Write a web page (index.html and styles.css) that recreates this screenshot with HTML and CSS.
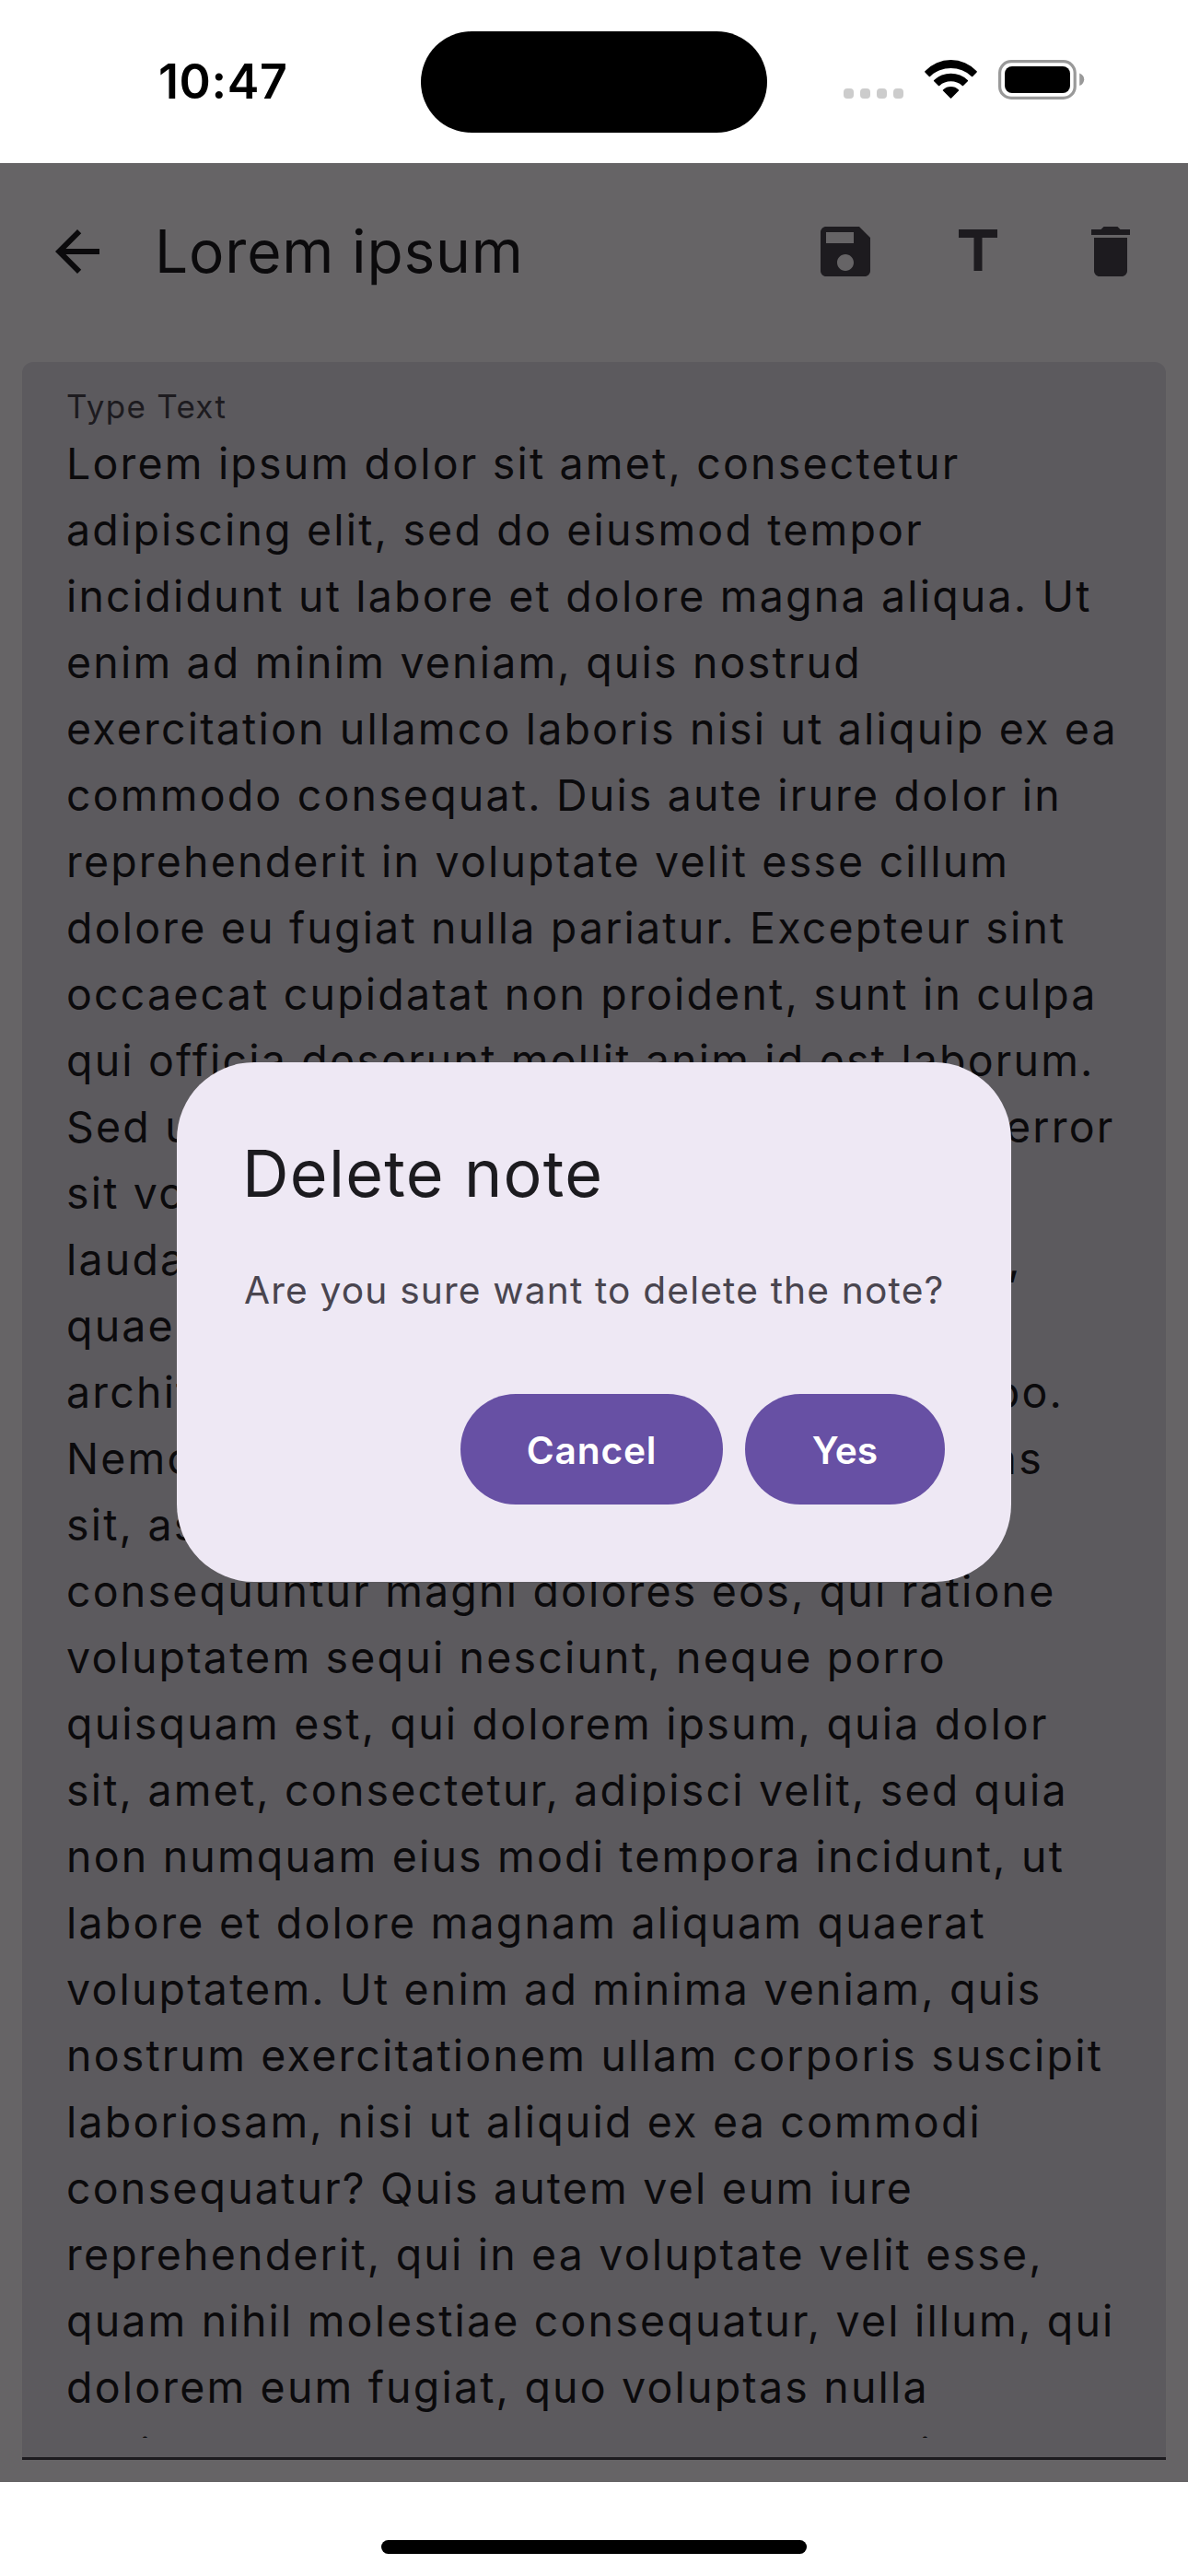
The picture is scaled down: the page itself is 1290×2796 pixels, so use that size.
FILE: index.html
```html
<!DOCTYPE html>
<html lang="en">
<head>
<meta charset="utf-8">
<title>Lorem ipsum</title>
<link rel="stylesheet" href="styles.css">
</head>
<body>
<div class="phone">
  <header class="status">
    <time class="clock">10:47</time>
    <div class="island"></div>
    <div class="indicators">
      <div class="cell"><i></i><i></i><i></i><i></i></div>
      <svg class="wifi" viewBox="0 0 57 42">
        <path d="M.4 12.2A38.5 38.5 0 0 1 56.6 12.2q.6.6 0 1.2L52.2 17.9q-.6.5-1.2 0A32.9 32.9 0 0 0 6 17.9q-.6.5-1.2 0L.4 13.4q-.6-.6 0-1.2z"/>
        <path d="M10.2 22.1A26.3 26.3 0 0 1 46.8 22.1q.6.6 0 1.2L42 27.9q-.6.5-1.2 0A18.7 18.7 0 0 0 16.2 27.9q-.6.5-1.2 0L10.2 23.3q-.6-.6 0-1.2z"/>
        <path d="M20 32.4A12.2 12.2 0 0 1 37 32.4q.6.6 0 1.2L29.1 41.6q-.6.5-1.2 0L20 33.6q-.6-.6 0-1.2z"/>
      </svg>
      <svg class="battery" viewBox="0 0 95 43">
        <rect x="1.6" y="1.6" width="81.6" height="39.8" rx="12.5" fill="none" stroke="#999" stroke-width="3.2"/>
        <rect x="7" y="7" width="71" height="29" rx="8"/>
        <path d="M88.2 14.5v13.6q5-2 5-6.8t-5-6.8z" fill="#999"/>
      </svg>
    </div>
  </header>

  <main class="app">
    <div class="toolbar">
      <svg class="icon back" viewBox="0 0 24 24"><path d="M20 11H7.83l5.59-5.59L12 4l-8 8 8 8 1.41-1.41L7.83 13H20z"/></svg>
      <h1 class="title">Lorem ipsum</h1>
      <svg class="icon" viewBox="0 0 24 24"><path d="M17 3H5c-1.110 0-2 .9-2 2v14c0 1.100.89 2 2 2h14c1.100 0 2-.9 2-2V7zm-5 16c-1.660 0-3-1.340-3-3s1.340-3 3-3 3 1.340 3 3-1.340 3-3 3m3-10H5V5h10z"/></svg>
      <svg class="icon" viewBox="0 0 24 24"><path d="M5 4v3h5.500v12h3V7H19V4z"/></svg>
      <svg class="icon" viewBox="0 0 24 24"><path d="M6 19c0 1.100.9 2 2 2h8c1.100 0 2-.9 2-2V7H6zM19 4h-3.500l-1-1h-5l-1 1H5v2h14z"/></svg>
    </div>

    <div class="field">
      <div class="label">Type Text</div>
      <div class="note">
        <p>Lorem ipsum dolor sit amet, consectetur</p>
        <p>adipiscing elit, sed do eiusmod tempor</p>
        <p>incididunt ut labore et dolore magna aliqua. Ut</p>
        <p>enim ad minim veniam, quis nostrud</p>
        <p>exercitation ullamco laboris nisi ut aliquip ex ea</p>
        <p>commodo consequat. Duis aute irure dolor in</p>
        <p>reprehenderit in voluptate velit esse cillum</p>
        <p>dolore eu fugiat nulla pariatur. Excepteur sint</p>
        <p>occaecat cupidatat non proident, sunt in culpa</p>
        <p>qui officia deserunt mollit anim id est laborum.</p>
        <p>Sed ut perspiciatis, unde omnis iste natus error</p>
        <p>sit voluptatem accusantium doloremque</p>
        <p>laudantium, totam rem aperiam eaque ipsa,</p>
        <p>quae ab illo inventore veritatis et quasi</p>
        <p>architecto beatae vitae dicta sunt, explicabo.</p>
        <p>Nemo enim ipsam voluptatem, quia voluptas</p>
        <p>sit, aspernatur aut odit aut fugit, sed quia</p>
        <p>consequuntur magni dolores eos, qui ratione</p>
        <p>voluptatem sequi nesciunt, neque porro</p>
        <p>quisquam est, qui dolorem ipsum, quia dolor</p>
        <p>sit, amet, consectetur, adipisci velit, sed quia</p>
        <p>non numquam eius modi tempora incidunt, ut</p>
        <p>labore et dolore magnam aliquam quaerat</p>
        <p>voluptatem. Ut enim ad minima veniam, quis</p>
        <p>nostrum exercitationem ullam corporis suscipit</p>
        <p>laboriosam, nisi ut aliquid ex ea commodi</p>
        <p>consequatur? Quis autem vel eum iure</p>
        <p>reprehenderit, qui in ea voluptate velit esse,</p>
        <p>quam nihil molestiae consequatur, vel illum, qui</p>
        <p>dolorem eum fugiat, quo voluptas nulla</p>
        <p>pariatur? At vero eos et accusamus et iusto</p>
      </div>
    </div>

    <div class="scrim">
      <section class="dialog" role="dialog">
        <h2 class="dialog-title">Delete note</h2>
        <p class="dialog-text">Are you sure want to delete the note?</p>
        <div class="actions">
          <button class="button cancel">Cancel</button>
          <button class="button yes">Yes</button>
        </div>
      </section>
    </div>
  </main>

  <footer class="home"><div class="home-bar"></div></footer>
</div>
</body>
</html>
```
FILE: styles.css
```css
* { box-sizing: border-box; margin: 0; padding: 0; }
body { background: #fff; font-family: Inter, "Liberation Sans", sans-serif; font-weight: 400; }
svg { display: block; flex: none; }

.phone { width: 1290px; height: 2796px; display: flex; flex-direction: column; overflow: hidden; }

/* System status bar */
.status { height: 177px; flex: none; display: grid; grid-template-columns: 457px 376px 457px; }
.clock { padding: 57px 0 0 172px; font-size: 52px; line-height: 64px; font-weight: 600; letter-spacing: .6px; }
.island { margin-top: 34px; height: 110px; border-radius: 55px; background: #000; }
.indicators { display: flex; align-items: flex-start; padding: 65px 0 0 83px; }
.cell { display: flex; gap: 7px; padding-top: 31px; }
.cell i { width: 11px; height: 11px; border-radius: 4px; background: #ccc; }
.wifi { width: 57px; height: 42px; margin-left: 23px; }
.battery { width: 95px; height: 43px; margin-left: 23px; }

/* Note editor */
.app { position: relative; height: 2517px; flex: none; padding: 0 24px 24px; background: #fffbfe; display: flex; flex-direction: column; gap: 24px; }
.toolbar { height: 192px; flex: none; display: flex; align-items: center; gap: 72px; padding: 0 24px; }
.icon { width: 72px; height: 72px; fill: #49454f; }
.icon.back { fill: #1c1b1f; }
.title { flex: 1; margin-left: -24px; font-size: 64px; line-height: 84px; font-weight: 400; letter-spacing: .85px; color: #1c1b1f; white-space: nowrap; }
.field { flex: 1; min-height: 0; display: flex; flex-direction: column; padding: 22px 48px 21px; border-radius: 12px 12px 0 0; border-bottom: 3px solid #49454f; background: #e7e0ec; }
.label { flex: none; font-size: 35px; line-height: 52px; letter-spacing: 1.3px; color: #49454f; }
.note { flex: 1; min-height: 0; overflow: hidden; font-size: 46.5px; line-height: 72px; letter-spacing: 2.18px; color: #1c1b1f; white-space: nowrap; }

/* Confirmation dialog */
.scrim { position: absolute; inset: 0; padding-bottom: 1px; display: flex; align-items: center; justify-content: center; background: rgba(0, 0, 0, .6); }
.dialog { width: 906px; padding: 73px 72px 84px; border-radius: 84px; background: #eee8f4; white-space: nowrap; }
.dialog-title { margin-left: -1px; font-size: 70px; line-height: 96px; font-weight: 400; letter-spacing: 1.3px; color: #1c1b1f; }
.dialog-text { margin-top: 49px; padding-left: 1px; font-size: 40.7px; line-height: 60px; letter-spacing: 1.16px; color: #49454f; }
.actions { display: flex; justify-content: flex-end; gap: 24px; margin-top: 82px; }
.button { height: 120px; border: 0; border-radius: 60px; padding-top: 3px; background: #6750a4; color: #fff; font: 600 40.7px/60px Inter, "Liberation Sans", sans-serif; }
.cancel { width: 285px; letter-spacing: .8px; }
.yes { width: 217px; }

/* Home indicator */
.home { flex: 1; display: flex; justify-content: center; padding-top: 63px; }
.home-bar { width: 462px; height: 15px; border-radius: 8px; background: #000; }
```
